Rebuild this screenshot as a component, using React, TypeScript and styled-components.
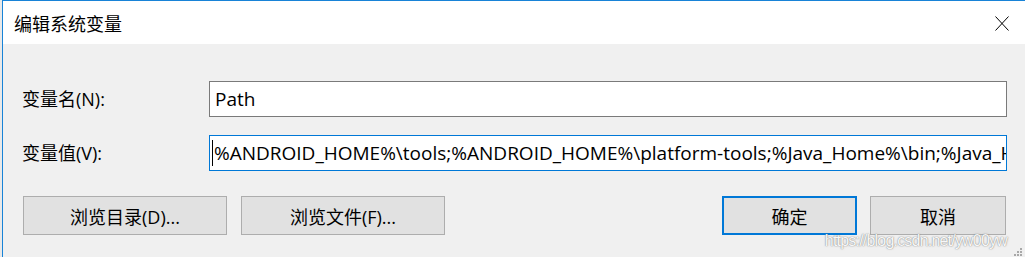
import styled, { createGlobalStyle } from "styled-components";

const GlobalStyle = createGlobalStyle`
  html, body {
    margin: 0;
    padding: 0;
    background: #e9e9e9;
  }
  body {
    font-family: "Open Sans", "Noto Sans", "Noto Sans CJK SC", sans-serif;
    color: #000;
  }
`;

const Window = styled.div`
  position: relative;
  display: flex;
  flex-direction: column;
  width: 1022px;
  height: 256px;
  margin-left: 2px;
  border-left: 1px solid #1883d7;
  border-top: 1px solid #1883d7;
  background: #f0f0f0;
  overflow: hidden;
`;

const TitleBar = styled.div`
  display: flex;
  align-items: center;
  justify-content: space-between;
  height: 43px;
  padding: 0 16px 0 11px;
  background: #fff;
`;

const Title = styled.span`
  font-family: "Noto Sans CJK SC", sans-serif;
  font-size: 18px;
  line-height: 1;
`;

const CloseIcon = styled.svg`
  width: 14px;
  height: 15px;
  margin-top: 1px;
`;

const Body = styled.div`
  display: flex;
  flex-direction: column;
  padding: 37px 18px 0 19px;
  gap: 18px;
`;

const FieldRow = styled.div`
  display: flex;
  align-items: center;
`;

const Label = styled.label`
  width: 187px;
  font-size: 18px;
  line-height: 1;
`;

const Field = styled.div<{ $focused?: boolean }>`
  display: flex;
  align-items: center;
  flex: 1;
  height: 36px;
  box-sizing: border-box;
  padding: 0 4px 0 2px;
  background: #fff;
  border: 1px solid ${(p) => (p.$focused ? "#0078d7" : "#7a7a7a")};
  font-size: 19px;
  white-space: nowrap;
  overflow: hidden;
`;

const Caret = styled.span`
  flex: none;
  width: 1px;
  height: 26px;
  margin-right: 1px;
  background: #000;
`;

const FieldText = styled.span<{ $indent?: boolean }>`
  padding-left: ${(p) => (p.$indent ? "3px" : "0")};
`;

const ButtonRow = styled.div`
  display: flex;
  justify-content: space-between;
  margin-top: 7px;
  padding: 0 1px 0 1px;
`;

const ButtonGroup = styled.div<{ $gap: number }>`
  display: flex;
  gap: ${(p) => p.$gap}px;
`;

const Button = styled.button<{ $width: number; $primary?: boolean }>`
  width: ${(p) => p.$width}px;
  height: 39px;
  box-sizing: border-box;
  background: #e1e1e1;
  border: ${(p) => (p.$primary ? "2px solid #0078d7" : "1px solid #adadad")};
  font-family: "Open Sans", "Noto Sans", "Noto Sans CJK SC", sans-serif;
  font-size: 18px;
  color: #000;
  padding: 0;
`;

const Watermark = styled.span`
  position: absolute;
  right: 18px;
  bottom: 7px;
  font-family: "Liberation Sans", Arial, sans-serif;
  font-size: 16px;
  letter-spacing: -0.8px;
  color: rgba(255, 255, 255, 0.95);
  text-shadow: 0 0 1px rgba(110, 110, 110, 0.9), 0 0 2px rgba(140, 140, 140, 0.5);
`;

const Grip = styled.svg`
  position: absolute;
  right: 2px;
  bottom: 0;
  width: 10px;
  height: 10px;
`;

export default function App() {
  return (
    <>
      <GlobalStyle />
      <Window>
        <TitleBar>
          <Title>编辑系统变量</Title>
          <CloseIcon viewBox="0 0 14 15">
            <path d="M0.5 0.5 L13.5 14.5 M13.5 0.5 L0.5 14.5" stroke="#000" strokeWidth="1" fill="none" />
          </CloseIcon>
        </TitleBar>
        <Body>
          <FieldRow>
            <Label>变量名(N):</Label>
            <Field>
              <FieldText $indent>Path</FieldText>
            </Field>
          </FieldRow>
          <FieldRow>
            <Label>变量值(V):</Label>
            <Field $focused>
              <Caret />
              <FieldText>
                %ANDROID_HOME%\tools;%ANDROID_HOME%\platform-tools;%Java_Home%\bin;%Java_Home%\jre\bin;
              </FieldText>
            </Field>
          </FieldRow>
          <ButtonRow>
            <ButtonGroup $gap={14}>
              <Button $width={204}>浏览目录(D)...</Button>
              <Button $width={204}>浏览文件(F)...</Button>
            </ButtonGroup>
            <ButtonGroup $gap={13}>
              <Button $width={135} $primary>
                确定
              </Button>
              <Button $width={136}>取消</Button>
            </ButtonGroup>
          </ButtonRow>
        </Body>
        <Watermark>https://blog.csdn.net/yw00yw</Watermark>
        <Grip viewBox="0 0 10 10">
          <g fill="#a8a8a8">
            <rect x="7" y="1" width="2" height="2" />
            <rect x="4" y="4" width="2" height="2" />
            <rect x="7" y="4" width="2" height="2" />
            <rect x="1" y="7" width="2" height="2" />
            <rect x="4" y="7" width="2" height="2" />
            <rect x="7" y="7" width="2" height="2" />
          </g>
        </Grip>
      </Window>
    </>
  );
}
